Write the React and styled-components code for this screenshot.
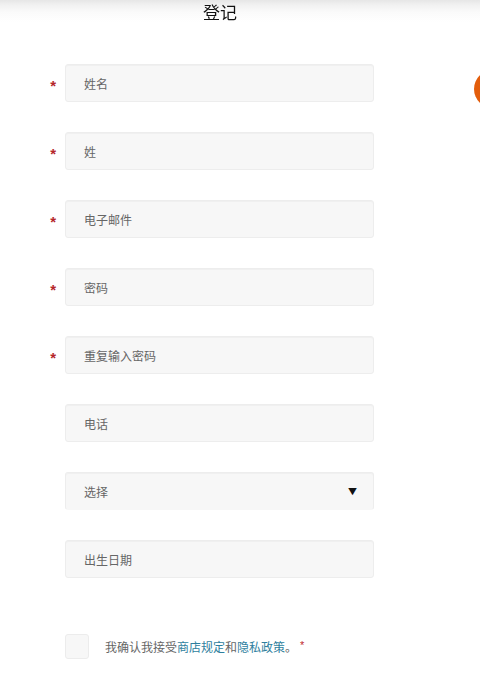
import { Fragment } from "react";
import styled, { createGlobalStyle } from "styled-components";

const GlobalStyle = createGlobalStyle`
  html, body {
    margin: 0;
    padding: 0;
    background: #fff;
  }
  body {
    font-family: "Open Sans", "Noto Sans CJK SC", sans-serif;
  }
  * { box-sizing: border-box; }
`;

const TopBar = styled.div`
  position: fixed;
  top: 0;
  left: 0;
  right: 0;
  height: 22px;
  background: linear-gradient(to bottom, #e6e6e6 0px, #f1f1f1 5px, #fafafa 12px, rgba(255, 255, 255, 0) 22px);
  z-index: 1;
`;

const Page = styled.div`
  width: 480px;
  height: 676px;
  overflow: hidden;
  position: relative;
`;

const Title = styled.h1`
  position: relative;
  z-index: 2;
  margin: 0;
  width: 440px;
  height: 64px;
  text-align: center;
  font-family: "Noto Sans CJK SC", sans-serif;
  font-size: 17px;
  font-weight: 400;
  line-height: 23px;
  color: #111;
`;

const Form = styled.form`
  display: grid;
  grid-template-columns: 65px 309px;
  row-gap: 30px;
  align-items: center;
`;

const Required = styled.span`
  justify-self: end;
  padding-right: 9px;
  padding-top: 5px;
  color: #b5262b;
  font-family: "Liberation Sans", sans-serif;
  font-size: 15px;
  font-weight: 700;
  line-height: 1;
`;

const Field = styled.div`
  grid-column: 2;
  height: 38px;
  display: flex;
  align-items: center;
  padding: 0 18px;
  background: #f7f7f7;
  border: 1px solid #ededed;
  border-bottom-color: ${(p) => (p.$open ? "#f7f7f7" : "#ededed")};
  border-radius: 3px;
  box-shadow: inset 0 1px 1px rgba(0, 0, 0, 0.03);
  font-family: "Noto Sans CJK SC", sans-serif;
  font-size: 12px;
  color: #666;
`;

const Arrow = styled.span`
  margin-left: auto;
  margin-right: -2px;
  font-size: 9px;
  color: #111;
`;

const CheckRow = styled.div`
  grid-column: 2;
  margin-top: 26px;
  display: flex;
  align-items: center;
  gap: 16px;
`;

const Box = styled.span`
  width: 24px;
  height: 25px;
  background: #f7f7f7;
  border: 1px solid #ececec;
  border-radius: 3px;
`;

const Consent = styled.span`
  font-family: "Noto Sans CJK SC", sans-serif;
  font-size: 12px;
  color: #666;
`;

const Link = styled.a`
  color: #2f7f9e;
  text-decoration: none;
`;

const Star = styled.span`
  margin-left: 3px;
  color: #c0282e;
  font-family: "Liberation Sans", sans-serif;
  font-size: 11px;
  vertical-align: 3px;
`;

const Bubble = styled.div`
  position: absolute;
  top: 70px;
  left: 474px;
  width: 38px;
  height: 38px;
  border-radius: 50%;
  background: #e35d0b;
`;

const fields = [
  { label: "姓名", required: true },
  { label: "姓", required: true },
  { label: "电子邮件", required: true },
  { label: "密码", required: true },
  { label: "重复输入密码", required: true },
  { label: "电话" },
];

export default function App() {
  return (
    <Page>
      <GlobalStyle />
      <TopBar />
      <Title>登记</Title>
      <Form>
        {fields.map((f) => (
          <Fragment key={f.label}>
            {f.required ? <Required>*</Required> : <span />}
            <Field>{f.label}</Field>
          </Fragment>
        ))}
        <span />
        <Field $open>
          选择
          <Arrow>▼</Arrow>
        </Field>
        <span />
        <Field>出生日期</Field>
        <span />
        <CheckRow>
          <Box />
          <Consent>
            我确认我接受<Link href="#">商店规定</Link>和<Link href="#">隐私政策</Link>。<Star>*</Star>
          </Consent>
        </CheckRow>
      </Form>
      <Bubble />
    </Page>
  );
}
